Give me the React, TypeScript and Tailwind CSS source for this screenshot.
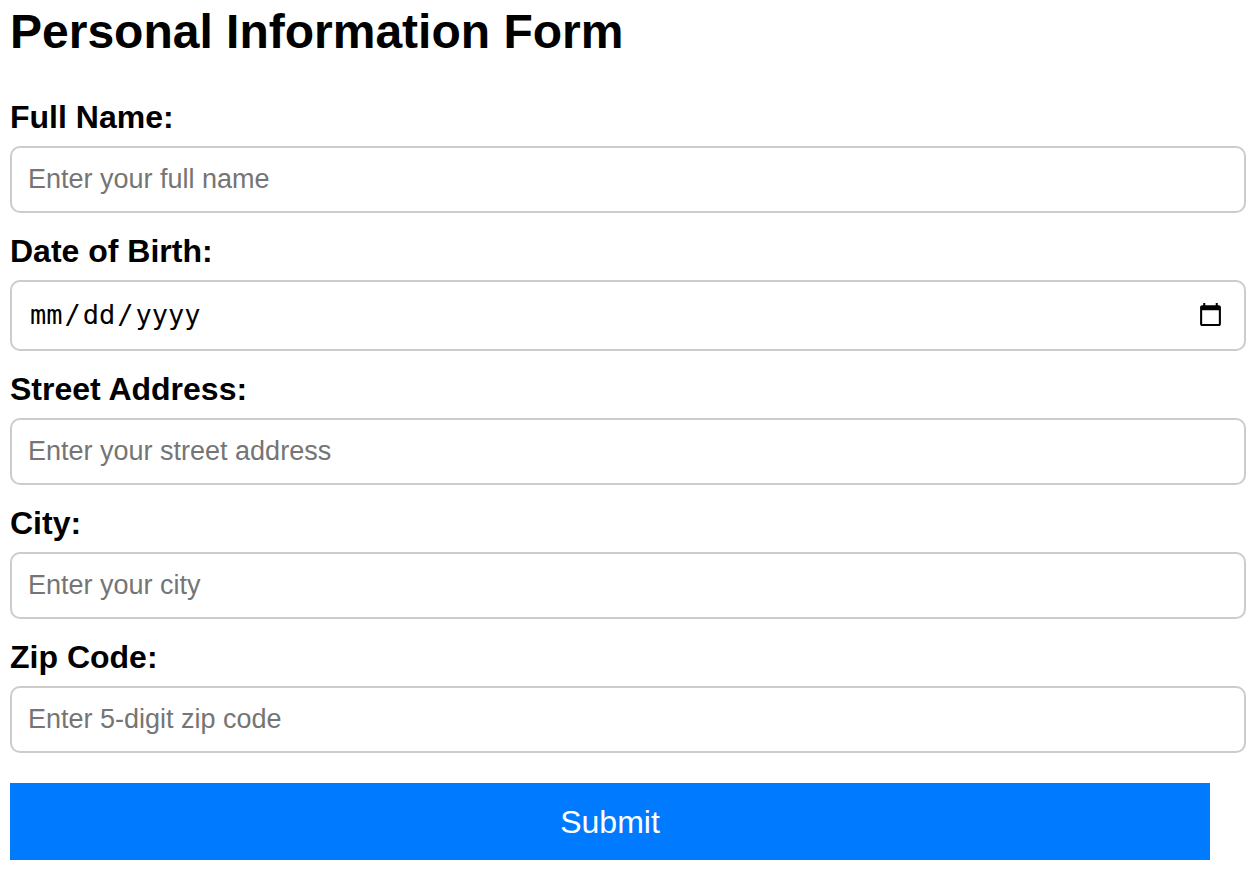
import React, { useState } from 'react';

interface FieldProps {
  id: string;
  label: string;
  placeholder: string;
  value: string;
  onChange: (value: string) => void;
}

const labelClass = 'block text-[32px] leading-[36px] font-bold';
const inputClass = 'block w-full mt-[11px] border-2 border-[#cccccc] rounded-[10px] bg-white focus:outline-none focus:border-[#007bff]';
// a little air round each part of the date
const datePartClass = '[&::-webkit-datetime-edit-month-field]:px-[2px] [&::-webkit-datetime-edit-day-field]:px-[2px] [&::-webkit-datetime-edit-year-field]:px-[2px]';

const TextField: React.FC<FieldProps> = ({ id, label, placeholder, value, onChange }) => (
  <div>
    <label htmlFor={id} className={labelClass}>{label}</label>
    <input
      id={id}
      type="text"
      value={value}
      onChange={(e) => onChange(e.target.value)}
      placeholder={placeholder}
      className={`${inputClass} h-[67px] px-4 text-[27px] placeholder:text-[#757575]`}
    />
  </div>
);

export default function App() {
  const [name, setName] = useState('');
  const [birthDate, setBirthDate] = useState('');
  const [street, setStreet] = useState('');
  const [city, setCity] = useState('');
  const [zip, setZip] = useState('');

  return (
    <main className="bg-white text-black pl-[10px] pr-3 pt-1 pb-4 font-['Liberation_Sans',Arial,sans-serif]">
      <h1 className="text-[48px] leading-[56px] font-bold">Personal Information Form</h1>

      <form onSubmit={(e) => e.preventDefault()} className="mt-[39px]">
        <div className="flex flex-col gap-5">
          <TextField id="name" label="Full Name:" placeholder="Enter your full name" value={name} onChange={setName} />
          <div>
            <label htmlFor="dob" className={labelClass}>Date of Birth:</label>
            <input
              id="dob"
              type="date"
              value={birthDate}
              onChange={(e) => setBirthDate(e.target.value)}
              className={`${inputClass} ${datePartClass} h-[71px] pl-4 pr-[18px] text-[27px] font-['DejaVu_Sans_Mono',monospace]`}
            />
          </div>
          <TextField id="street" label="Street Address:" placeholder="Enter your street address" value={street} onChange={setStreet} />
          <TextField id="city" label="City:" placeholder="Enter your city" value={city} onChange={setCity} />
          <TextField id="zip" label="Zip Code:" placeholder="Enter 5-digit zip code" value={zip} onChange={setZip} />
        </div>

        <div className="mt-[30px] pr-9">
          <button type="submit" className="block w-full h-[77px] bg-[#007bff] text-white text-[32px] cursor-pointer hover:bg-[#0069d9]">
            Submit
          </button>
        </div>
      </form>
    </main>
  );
}
